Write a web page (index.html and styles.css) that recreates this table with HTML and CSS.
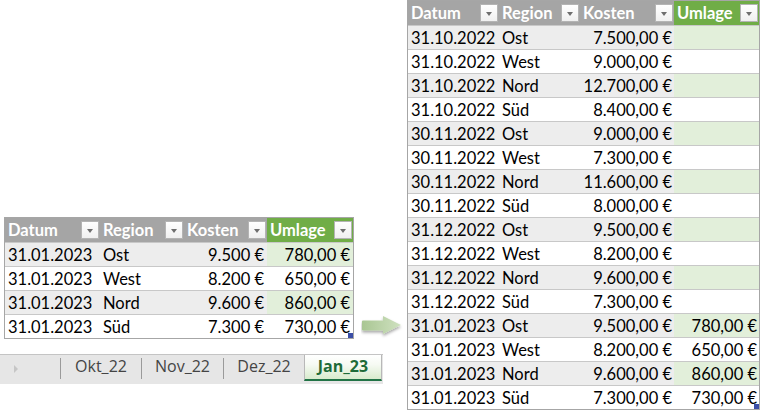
FILE: index.html
```html
<!DOCTYPE html>
<html lang="de">
<head>
<meta charset="utf-8">
<title>Umlage</title>
<link rel="stylesheet" href="styles.css">
</head>
<body>
<div class="stage">
  <div class="left">
    <div class="top-row">
      <div class="tbl-wrap">
        <table class="xl xl-left">
          <colgroup><col class="l1"><col class="l2"><col class="l3"><col class="l4"></colgroup>
          <thead>
            <tr>
              <th><div class="hc"><span>Datum</span><span class="dd"></span></div></th>
              <th><div class="hc"><span>Region</span><span class="dd"></span></div></th>
              <th><div class="hc"><span>Kosten</span><span class="dd"></span></div></th>
              <th class="g"><div class="hc"><span>Umlage</span><span class="dd"></span></div></th>
            </tr>
          </thead>
          <tbody>
            <tr class="band"><td>31.01.2023</td><td>Ost</td><td class="num">9.500 €</td><td class="num u">780,00 €</td></tr>
            <tr><td>31.01.2023</td><td>West</td><td class="num">8.200 €</td><td class="num u">650,00 €</td></tr>
            <tr class="band"><td>31.01.2023</td><td>Nord</td><td class="num">9.600 €</td><td class="num u">860,00 €</td></tr>
            <tr><td>31.01.2023</td><td>Süd</td><td class="num">7.300 €</td><td class="num u">730,00 €</td></tr>
          </tbody>
        </table>
        <span class="handle"></span>
      </div>
      <svg class="arrow" width="44" height="24" viewBox="0 0 44 24" aria-hidden="true">
        <defs>
          <linearGradient id="ag" x1="0" y1="0" x2="1" y2="0">
            <stop offset="0" stop-color="#a9c693"/>
            <stop offset="1" stop-color="#cfe1c0"/>
          </linearGradient>
          <filter id="sh" x="-20%" y="-30%" width="140%" height="180%">
            <feDropShadow dx="0" dy="2" stdDeviation="1.4" flood-color="#000" flood-opacity="0.35"/>
          </filter>
        </defs>
        <path d="M2 5.5 H22 V1 L40 10 L22 19 V15.5 H2 Q1 15.5 1 14.5 V6.5 Q1 5.5 2 5.5 Z" fill="url(#ag)" filter="url(#sh)"/>
      </svg>
    </div>
    <div class="tabs">
      <span class="tab-nav"></span>
      <span class="sep"></span>
      <span class="tab">Okt_22</span>
      <span class="sep"></span>
      <span class="tab">Nov_22</span>
      <span class="sep"></span>
      <span class="tab">Dez_22</span>
      <span class="tab active">Jan_23</span>
    </div>
  </div>
  <div class="tbl-wrap">
    <table class="xl xl-right">
      <colgroup><col class="r1"><col class="r2"><col class="r3"><col class="r4"></colgroup>
      <thead>
        <tr>
          <th><div class="hc"><span>Datum</span><span class="dd"></span></div></th>
          <th><div class="hc"><span>Region</span><span class="dd"></span></div></th>
          <th><div class="hc"><span>Kosten</span><span class="dd"></span></div></th>
          <th class="g"><div class="hc"><span>Umlage</span><span class="dd"></span></div></th>
        </tr>
      </thead>
      <tbody>
        <tr class="band"><td>31.10.2022</td><td>Ost</td><td class="num">7.500,00 €</td><td class="num u"></td></tr>
        <tr><td>31.10.2022</td><td>West</td><td class="num">9.000,00 €</td><td class="num u"></td></tr>
        <tr class="band"><td>31.10.2022</td><td>Nord</td><td class="num">12.700,00 €</td><td class="num u"></td></tr>
        <tr><td>31.10.2022</td><td>Süd</td><td class="num">8.400,00 €</td><td class="num u"></td></tr>
        <tr class="band"><td>30.11.2022</td><td>Ost</td><td class="num">9.000,00 €</td><td class="num u"></td></tr>
        <tr><td>30.11.2022</td><td>West</td><td class="num">7.300,00 €</td><td class="num u"></td></tr>
        <tr class="band"><td>30.11.2022</td><td>Nord</td><td class="num">11.600,00 €</td><td class="num u"></td></tr>
        <tr><td>30.11.2022</td><td>Süd</td><td class="num">8.000,00 €</td><td class="num u"></td></tr>
        <tr class="band"><td>31.12.2022</td><td>Ost</td><td class="num">9.500,00 €</td><td class="num u"></td></tr>
        <tr><td>31.12.2022</td><td>West</td><td class="num">8.200,00 €</td><td class="num u"></td></tr>
        <tr class="band"><td>31.12.2022</td><td>Nord</td><td class="num">9.600,00 €</td><td class="num u"></td></tr>
        <tr><td>31.12.2022</td><td>Süd</td><td class="num">7.300,00 €</td><td class="num u"></td></tr>
        <tr class="band"><td>31.01.2023</td><td>Ost</td><td class="num">9.500,00 €</td><td class="num u">780,00 €</td></tr>
        <tr><td>31.01.2023</td><td>West</td><td class="num">8.200,00 €</td><td class="num u">650,00 €</td></tr>
        <tr class="band"><td>31.01.2023</td><td>Nord</td><td class="num">9.600,00 €</td><td class="num u">860,00 €</td></tr>
        <tr><td>31.01.2023</td><td>Süd</td><td class="num">7.300,00 €</td><td class="num u">730,00 €</td></tr>
      </tbody>
    </table>
    <span class="handle"></span>
  </div>
</div>
</body>
</html>
```

FILE: styles.css
```css
* { box-sizing: border-box; }
html, body { margin: 0; padding: 0; background: #fff; }
body { width: 762px; height: 410px; overflow: hidden; }

.stage { display: flex; align-items: flex-start; }

.left {
  width: 407px;
  padding-top: 217px;
  display: flex;
  flex-direction: column;
}

.top-row { display: flex; align-items: flex-end; padding-left: 4px; }

.tbl-wrap { position: relative; }

.xl {
  border-collapse: separate;
  border-spacing: 0;
  table-layout: fixed;
  border: 1px solid #a6a6a6;
  font-family: Lato, "Liberation Sans", sans-serif;
  font-size: 16.5px;
  color: #000;
}
.xl-left { width: 350px; }
.xl-right { width: 353px; }

.l1 { width: 95px; } .l2 { width: 84px; } .l3 { width: 83px; } .l4 { width: 86px; }
.r1 { width: 91px; } .r2 { width: 81px; } .r3 { width: 94px; } .r4 { width: 85px; }

.xl th {
  background: #a5a5a5;
  color: #fff;
  font-weight: 700;
  padding: 0;
  height: 24px;
  text-align: left;
}
.xl th.g { background: #70ad47; }

.hc {
  display: flex;
  align-items: center;
  justify-content: space-between;
  height: 24px;
  padding-left: 3px;
  padding-right: 1px;
}

.dd {
  width: 18px;
  height: 18px;
  border: 1px solid #b4b4b4;
  background: linear-gradient(#ffffff, #f0f0f0);
  display: flex;
  align-items: center;
  justify-content: center;
}
.dd::after {
  content: "";
  border-left: 3.5px solid transparent;
  border-right: 3.5px solid transparent;
  border-top: 4px solid #6e6e6e;
  margin-top: 1px;
}

.xl td {
  height: 24px;
  padding: 0 3px;
  border-top: 1px solid #c8c8c8;
  white-space: nowrap;
  line-height: 22px;
}
.xl td.num { text-align: right; }
.xl-right td.num { padding-right: 2px; }
.xl tr.band td { background: #ededed; }
.xl tr.band td.u { background: #e2efda; }

.handle {
  position: absolute;
  right: 1px;
  bottom: 1px;
  width: 5px;
  height: 5px;
  background: #3b4ea6;
}

.arrow { display: block; margin-left: 7px; margin-bottom: 0; }

.tabs {
  margin-top: 15px;
  width: 383px;
  height: 30px;
  background: #e6e6e6;
  border-top: 1px solid #c4c4c4;
  display: flex;
  align-items: stretch;
  font-family: "Open Sans", "Noto Sans", sans-serif;
  font-size: 16px;
  color: #444;
}
.tab-nav {
  width: 60px;
  position: relative;
}
.tab-nav::before {
  content: "";
  position: absolute;
  left: 14px;
  top: 10px;
  border-top: 4px solid transparent;
  border-bottom: 4px solid transparent;
  border-left: 4px solid #c6c6c6;
}
.sep {
  width: 1px;
  background: #9a9a9a;
  margin: 3px 0 5px;
}
.tab {
  display: flex;
  align-items: center;
  justify-content: center;
  padding-bottom: 7px;
}
.tabs .tab:nth-of-type(3) { width: 80px; }
.tabs .tab:nth-of-type(5) { width: 81px; }
.tabs .tab:nth-of-type(7) { width: 80px; }
.tab.active {
  width: 78px;
  margin-left: 0;
  background: linear-gradient(#ffffff 0%, #f6faf3 40%, #d8ebcd 100%);
  border-left: 1px solid #b8b8b8;
  border-right: 1px solid #b8b8b8;
  border-bottom: 2px solid #217346;
  color: #1e6b38;
  font-weight: 700;
  height: 26px;
  padding-bottom: 3px;
}
```
